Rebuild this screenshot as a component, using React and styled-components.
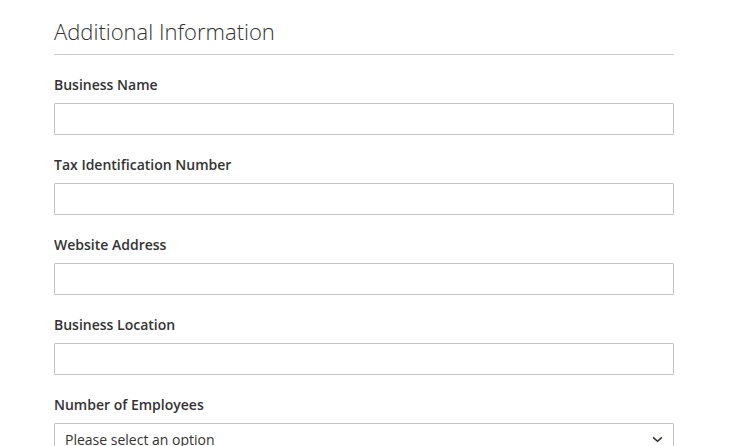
import React from 'react'
import styled, { createGlobalStyle } from 'styled-components'

const GlobalStyle = createGlobalStyle`
  html, body {
    margin: 0;
    padding: 0;
    background: #fff;
    font-family: 'Open Sans', 'Liberation Sans', sans-serif;
    color: #333;
  }
`

const fields = [
  'Business Name',
  'Tax Identification Number',
  'Website Address',
  'Business Location',
]

const App = () => {
  return (
    <>
      <GlobalStyle />
      <Container>
        <Legend>Additional Information</Legend>
        {fields.map((name) => (
          <Field key={name}>
            <Label>{name}</Label>
            <Input type="text" />
          </Field>
        ))}
        <Field>
          <Label>Number of Employees</Label>
          <SelectBox>
            <span>Please select an option</span>
            <Chevron viewBox="0 0 12 8">
              <polyline points="1,1.5 6,6 11,1.5" />
            </Chevron>
          </SelectBox>
        </Field>
      </Container>
    </>
  )
}

export default App

const Container = styled.div`
  width: 620px;
  padding: 0 0 0 54px;
  height: 446px;
  overflow: hidden;
`

const Legend = styled.div`
  font-size: 22px;
  font-weight: 300;
  line-height: 26px;
  padding-top: 18px;
  padding-bottom: 10px;
  border-bottom: 1px solid #ccc;
  margin-bottom: 20px;
  color: #333;
`

const Field = styled.div`
  display: flex;
  flex-direction: column;
  margin-bottom: 20px;
`

const Label = styled.label`
  font-size: 14px;
  font-weight: 600;
  line-height: 20px;
  margin-bottom: 8px;
  color: #333;
`

const Input = styled.input`
  box-sizing: border-box;
  width: 100%;
  height: 32px;
  border: 1px solid #c2c2c2;
  border-radius: 1px;
  padding: 0 9px;
  font-family: inherit;
  font-size: 14px;
  outline: none;
  background: #fff;
`

const SelectBox = styled.div`
  box-sizing: border-box;
  width: 100%;
  height: 32px;
  border: 1px solid #c2c2c2;
  border-radius: 1px;
  padding: 0 10px;
  display: flex;
  align-items: center;
  justify-content: space-between;
  font-size: 14px;
  color: #333;
`

const Chevron = styled.svg`
  width: 11px;
  height: 7px;
  fill: none;
  stroke: #303050;
  stroke-width: 1.8;
  margin-right: 0;
`
